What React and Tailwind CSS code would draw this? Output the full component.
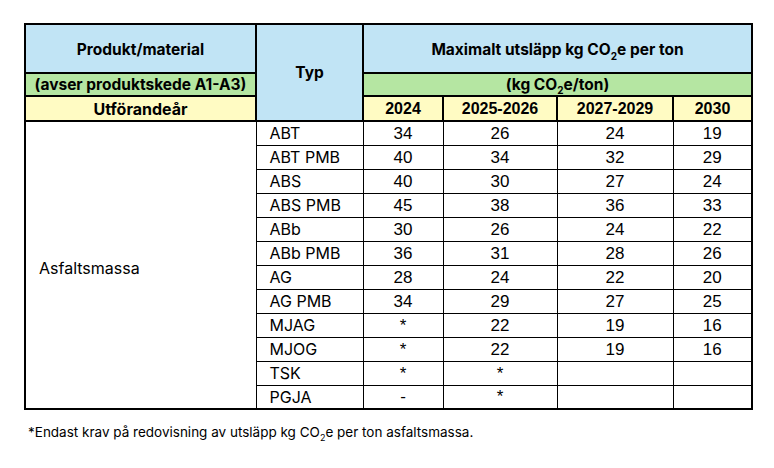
import React from "react";

const rows = [
  ["ABT", "34", "26", "24", "19"],
  ["ABT PMB", "40", "34", "32", "29"],
  ["ABS", "40", "30", "27", "24"],
  ["ABS PMB", "45", "38", "36", "33"],
  ["ABb", "30", "26", "24", "22"],
  ["ABb PMB", "36", "31", "28", "26"],
  ["AG", "28", "24", "22", "20"],
  ["AG PMB", "34", "29", "27", "25"],
  ["MJAG", "*", "22", "19", "16"],
  ["MJOG", "*", "22", "19", "16"],
  ["TSK", "*", "*", "", ""],
  ["PGJA", "-", "*", "", ""],
];

const aptos = "font-['Inter','Noto_Sans',sans-serif]";
const arial = "font-['Liberation_Sans',Arial,sans-serif]";

export default function App() {
  return (
    <div className="w-[774px] h-[468px] bg-white pt-[23px] pl-[24px] text-black">
      <table className="table-fixed border-collapse w-[727px] border-2 border-black">
        <colgroup>
          <col className="w-[231px]" />
          <col className="w-[107px]" />
          <col className="w-[80px]" />
          <col className="w-[114px]" />
          <col className="w-[116px]" />
          <col className="w-[79px]" />
        </colgroup>
        <tbody>
          <tr className="h-[49px]">
            <td className={`bg-[#c1e4f5] border border-black border-b-2 text-center font-bold text-[15.5px] pt-[3px] ${aptos}`}>
              Produkt/material
            </td>
            <td rowSpan={3} className={`bg-[#c1e4f5] border-l-2 border-r-2 border-b-2 border-black text-center font-bold text-[15.5px] ${aptos}`}>
              Typ
            </td>
            <td colSpan={4} className={`bg-[#c1e4f5] border border-black border-b-2 text-center font-bold text-[15.5px] pt-[3px] ${aptos}`}>
              Maximalt utsläpp kg CO<sub className="text-[10px] align-[-2px]">2</sub>e per ton
            </td>
          </tr>
          <tr className="h-[23px]">
            <td className={`bg-[#b5e6a2] border-b-2 border-black text-center font-bold text-[15.5px] leading-none ${aptos}`}>
              (avser produktskede A1-A3)
            </td>
            <td colSpan={4} className={`bg-[#b5e6a2] border-b-2 border-black text-center font-bold text-[15.5px] leading-none ${aptos}`}>
              (kg CO<sub className="text-[10px] align-[-2px]">2</sub>e/ton)
            </td>
          </tr>
          <tr className="h-[25px]">
            <td className={`bg-[#fffbc3] border-b-2 border-black text-center font-bold text-[16px] leading-none ${aptos}`}>
              Utförandeår
            </td>
            {["2024", "2025-2026", "2027-2029", "2030"].map((y) => (
              <td key={y} className={`bg-[#fffbc3] border-b-2 border-l-2 border-black text-center font-bold text-[16px] leading-none ${arial}`}>
                {y}
              </td>
            ))}
          </tr>
          {rows.map((r, i) => (
            <tr key={r[0]} className="h-[24px]">
              {i === 0 && (
                <td rowSpan={12} className={`align-middle pl-[13px] pt-[6px] text-[16px] border-r border-black ${aptos}`}>
                  Asfaltsmassa
                </td>
              )}
              <td className={`border border-black pl-[13px] text-[16px] leading-none ${aptos}`}>{r[0]}</td>
              {r.slice(1).map((v, j) => (
                <td key={j} className={`border border-black text-center text-[17px] leading-none ${arial}`}>
                  {v}
                </td>
              ))}
            </tr>
          ))}
        </tbody>
      </table>
      <p className={`mt-[12px] ml-[4px] text-[13.5px] ${aptos}`}>
        *Endast krav på redovisning av utsläpp kg CO<sub className="text-[9px] align-[-2px]">2</sub>e per ton asfaltsmassa.
      </p>
    </div>
  );
}
